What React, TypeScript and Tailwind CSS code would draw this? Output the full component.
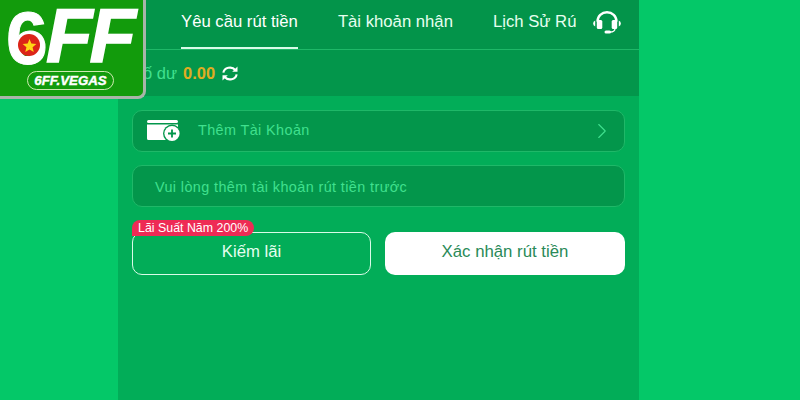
import React from "react";
import { ChevronRight } from "lucide-react";

const font = "font-['Liberation_Sans',Arial,sans-serif]";

function Logo() {
    return (
        <div className="absolute left-0 top-0 w-[146px] h-[99px] bg-[#129b0c] border-r-[3px] border-b-[3px] border-[#a9b5a9] rounded-br-[8px] overflow-hidden">
            <div className="relative w-full h-full">
                <span className="absolute left-[6px] top-[-12px] text-[75px] leading-[100px] font-bold text-white [-webkit-text-stroke:1px_white] font-['Liberation_Sans',sans-serif]">6</span>
                <span className="absolute left-[46px] top-[-14px] text-[76px] leading-[100px] font-bold italic tracking-[-3px] text-white [-webkit-text-stroke:1.5px_white] font-['Liberation_Sans',sans-serif]">FF</span>
                <div className="absolute left-[18px] top-[34px] w-[22px] h-[22px] rounded-full bg-[#dc2418] flex items-center justify-center">
                    <svg viewBox="0 0 24 24" className="w-[15px] h-[15px]">
                        <path fill="#ffd516" d="M12 1.5l3 7.4 8 .6-6.1 5.1 1.9 7.9L12 18.3l-6.8 4.2 1.9-7.9L1 9.5l8-.6z" />
                    </svg>
                </div>
                <div className="absolute left-[27px] top-[71px] w-[87px] h-[19px] rounded-full border border-[#cdeab0] flex items-center justify-center">
                    <span className="text-[13.300px] leading-none font-bold italic text-white [-webkit-text-stroke:0.4px_white] font-['Liberation_Sans',sans-serif]">6FF.VEGAS</span>
                </div>
            </div>
        </div>
    );
}

function Headset() {
    return (
        <svg viewBox="0 0 30 23" className="h-[23px] w-[30px] shrink-0 text-white" fill="none">
            <path d="M5.500 10.500a9.500 9.300 0 0 1 19 0" stroke="currentColor" strokeWidth="2.400" />
            <rect x="4.800" y="9" width="5.500" height="9" rx="1.500" fill="currentColor" />
            <rect x="19.700" y="9" width="5.500" height="9" rx="1.500" fill="currentColor" />
            <path d="M3.200 9.500a3.200 3.200 0 0 0 0 6z M26.800 9.500a3.200 3.200 0 0 1 0 6z" fill="currentColor" />
            <path d="M23 17.500c0 2.500-2 3.500-5 3.500" stroke="currentColor" strokeWidth="1.300" />
            <rect x="12.500" y="19.500" width="6.500" height="3" rx="1.500" fill="currentColor" />
        </svg>
    );
}

function Refresh() {
    return (
        <svg viewBox="0 0 20 17" className="h-[15px] w-[18px] text-white" fill="none" stroke="currentColor" strokeWidth="2.400">
            <path d="M2.500 7.500a7.500 6.500 0 0 1 13.500-3" />
            <path d="M17.500 9.500a7.500 6.500 0 0 1-13.500 3" />
            <path d="M18.500 0.500v6h-6z" fill="currentColor" stroke="none" />
            <path d="M1.500 16.500v-6h6z" fill="currentColor" stroke="none" />
        </svg>
    );
}

function CardIcon() {
    return (
        <svg viewBox="0 0 34 22" className="h-[22px] w-[34px]">
            <rect x="0" y="0" width="31" height="3" rx="1.500" fill="#fff" />
            <path d="M0 4.500h31V15H0z M0 15h20v5H1.500A1.500 1.500 0 0 1 0 18.500z" fill="#fff" />
            <circle cx="25" cy="13.500" r="9" fill="#03964b" />
            <circle cx="25" cy="13.500" r="7.600" fill="#fff" />
            <path d="M25 9.500v8M21 13.500h8" stroke="#03964b" strokeWidth="1.800" />
        </svg>
    );
}

export default function App() {
    return (
        <div className={`relative h-[400px] w-[800px] overflow-hidden bg-[#04c868] ${font}`}>
            <div className="ml-[118px] flex h-full w-[521px] flex-col bg-[#02ad58]">
                <div className="flex h-[50px] shrink-0 items-center border-b border-[#1fb868] bg-[#03944a]">
                    <div className="ml-[63px] flex h-[49px] w-[395px] gap-[40px] overflow-hidden whitespace-nowrap text-[16.700px] text-[#e6fff0]">
                        <div className="flex h-full flex-col items-center">
                            <span className="flex-1 pt-[9px] text-white">Yêu cầu rút tiền</span>
                            <div className="h-[2px] w-full bg-[#d9fbe8]" />
                        </div>
                        <span className="pt-[9px]">Tài khoản nhận</span>
                        <span className="pt-[9px]">Lịch Sử Rút Tiền</span>
                    </div>
                    <div className="ml-[16px] flex pb-[5px]"><Headset /></div>
                </div>
                <div className="flex h-[46px] shrink-0 items-center gap-[6px] bg-[#03964b] pl-[14px] text-[16.500px]">
                    <span className="text-[#40e08e]">Số dư</span>
                    <span className="font-bold text-[#e0ad22]">0.00</span>
                    <Refresh />
                </div>
                <div className="flex flex-col px-[14px] pt-[14px]">
                    <div className="flex h-[42px] items-center rounded-[10px] border border-[#1fb868] bg-[#03964b] pl-[14px] pr-[9px] text-[14.400px] tracking-[0.4px] text-[#40e08e]">
                        <CardIcon />
                        <span className="ml-[17px] flex-1">Thêm Tài Khoản</span>
                        <ChevronRight className="h-[26px] w-[26px]" strokeWidth={1} />
                    </div>
                    <div className="mt-[13px] flex h-[42px] items-center rounded-[10px] border border-[#1fb868] bg-[#03964b] pl-[22px] pt-[3px] text-[14.400px] tracking-[0.4px] text-[#40e08e]">
                        Vui lòng thêm tài khoản rút tiền trước
                    </div>
                    <div className="mt-[25px] flex gap-[14px]">
                        <button className="relative h-[43px] w-[239px] rounded-[10px] border border-[#d9fbe8] pb-[4px] text-[16.700px] text-[#e6fff0]">
                            Kiếm lãi
                            <span className="absolute left-[-1px] top-[-13px] flex h-[16px] items-center rounded-t-[9px] rounded-br-[9px] bg-[#ee2b55] px-[6px] text-[12.400px] leading-none text-white">Lãi Suất Năm 200%</span>
                        </button>
                        <button className="h-[43px] w-[240px] rounded-[10px] bg-white pb-[3px] text-[16.800px] text-[#2a8a58]">
                            Xác nhận rút tiền
                        </button>
                    </div>
                </div>
            </div>
            <Logo />
        </div>
    );
}
